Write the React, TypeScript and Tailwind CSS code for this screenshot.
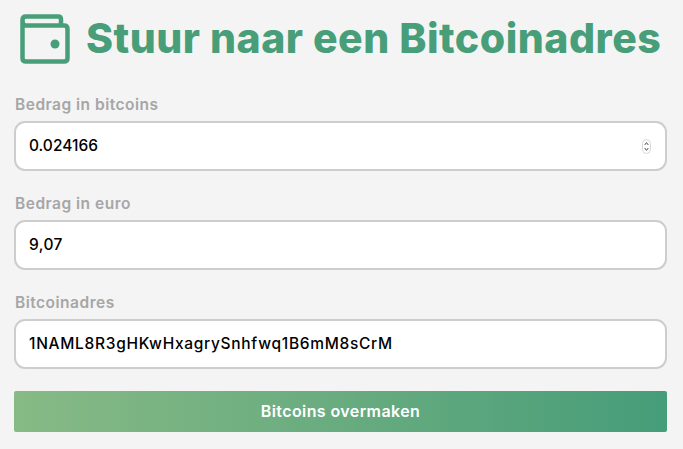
export default function App() {
  return (
    <div className="w-[683px] h-[449px] overflow-hidden bg-[#f4f4f4] font-['Inter',sans-serif] pl-[14px] pr-[16px] pt-[8px]">
      <div className="flex items-center h-[62px] pl-[6px] gap-[16px]">
        <svg width="50" height="50" viewBox="0 0 50 50" fill="none" stroke="#479e79" strokeWidth="4.5" strokeLinejoin="round">
          <path d="M2.5 6 V44 Q2.5 47.5 6 47.5 H44 Q47.5 47.5 47.5 44 V15 Q47.5 11.5 44 11.5 H6 Q2.5 11.5 2.5 6 Q2.5 2.5 6 2.5 H38 Q41 2.5 41 5.5 V11.5" />
          <circle cx="35" cy="30" r="4.5" fill="#479e79" stroke="none" />
        </svg>
        <h1 className="text-[41px] leading-none pb-[2px] font-extrabold text-[#479e79] whitespace-nowrap tracking-[0.5px]">Stuur naar een Bitcoinadres</h1>
      </div>
      <div className="mt-[25px] flex flex-col">
        <label className="pl-[1px] text-[15.5px] leading-[20px] font-semibold tracking-[0.5px] text-[#a6a6a6]">Bedrag in bitcoins</label>
        <div className="relative mt-[6px]">
          <input readOnly value="0.024166" className="w-full h-[50px] rounded-[11px] border-[2.5px] border-[#cdcdcd] bg-white pl-[13px] pr-[12px] pb-[2px] text-[15.5px] font-medium text-black outline-none" />
          <svg className="absolute right-[16px] top-[18px]" width="9" height="15" viewBox="0 0 9 15" fill="none">
            <rect x="0.5" y="0.5" width="8" height="14" rx="4" fill="#fff" stroke="#d8d8d8" />
            <path d="M2.7 6 L4.5 3.6 L6.3 6 M2.7 9 L4.5 11.4 L6.3 9" stroke="#555" strokeWidth="1" />
          </svg>
        </div>
        <label className="pl-[1px] mt-[23px] text-[15.5px] leading-[20px] font-semibold tracking-[0.5px] text-[#a6a6a6]">Bedrag in euro</label>
        <input readOnly value="9,07" className="mt-[6px] w-full h-[50px] rounded-[11px] border-[2.5px] border-[#cdcdcd] bg-white pl-[13px] pr-[12px] pb-[2px] text-[15.5px] font-medium tracking-[0.4px] text-black outline-none" />
        <label className="pl-[1px] mt-[23px] text-[15.5px] leading-[20px] font-semibold tracking-[0.5px] text-[#a6a6a6]">Bitcoinadres</label>
        <input readOnly value="1NAML8R3gHKwHxagrySnhfwq1B6mM8sCrM" className="mt-[6px] w-full h-[50px] rounded-[11px] border-[2.5px] border-[#cdcdcd] bg-white pl-[13px] pr-[12px] pb-[2px] text-[15.5px] font-medium tracking-[0.7px] text-black outline-none" />
        <button className="mt-[22px] h-[41px] w-full rounded-[2px] pb-[2px] bg-gradient-to-r from-[#87ba85] to-[#459d79] text-white text-[16px] tracking-[0.4px] font-semibold">Bitcoins overmaken</button>
      </div>
    </div>
  );
}
